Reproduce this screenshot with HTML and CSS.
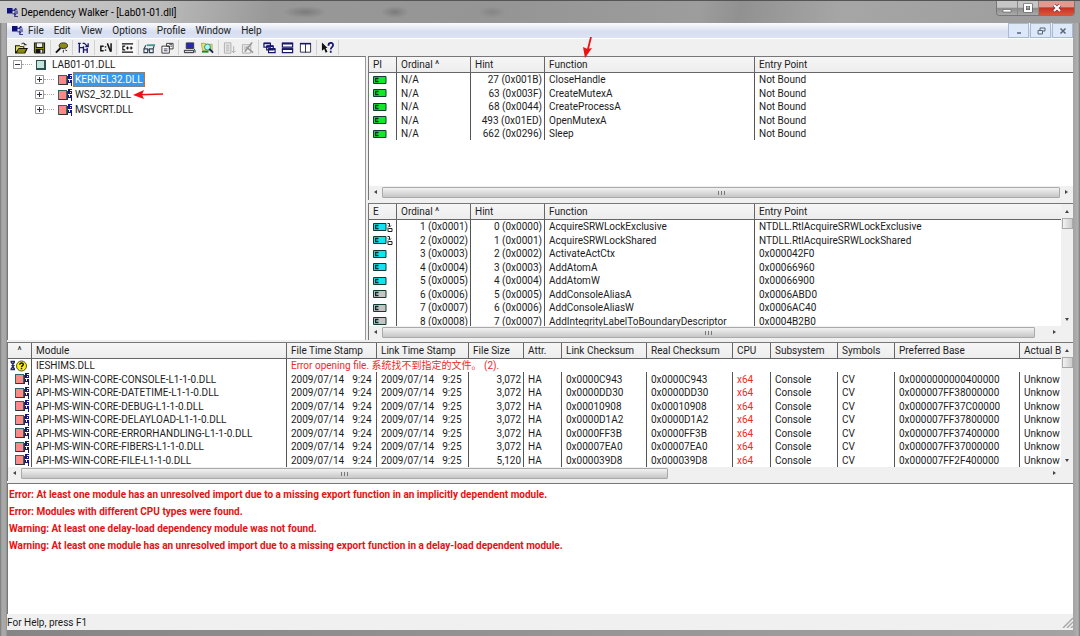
FILE: index.html
```html
<!DOCTYPE html>
<html lang="en">
<head>
<meta charset="utf-8">
<title>Dependency Walker - [Lab01-01.dll]</title>
<link rel="stylesheet" href="styles.css">
</head>
<body>
<svg class="symbols" aria-hidden="true">
  <symbol id="logo" viewBox="0 0 12 12"><path fill="#10107a" d="M0 1h6v6H0zM6 3h2v1H6zM8 2h1v3H8zM9 1h1v1H9zM9 2h2v1H9zM9 4h3v1H9zM6 7h2v1H6zM8 6h1v5H8zM9 6h3v1H9zM9 8h1v1H9zM9 10h3v1H9z"/></symbol>
  <symbol id="mod64" viewBox="0 0 15 12"><path fill="#2d6464" d="M0 1h9v10H0z"/><path fill="#f88" d="M1 2h7v8H1z"/><path fill="#333" d="M1 10h8V2h1v9H1z"/><path fill="#141482" fill-rule="evenodd" d="M10 0h4v1h-2v1h2v3h-4zM12 3v1h1V3zM10 6h1v2h1V6h2v6h-1V9h-3z"/></symbol>
  <symbol id="rootmod" viewBox="0 0 10 10"><path fill="#2d5050" d="M0 0h10v10H0z"/><path fill="#c4e4dc" d="M1 1h7v7H1z"/></symbol>
  <symbol id="fn" viewBox="0 0 20 10"><path fill="currentColor" stroke="#123c32" d="M.5 1.500h12.500v7H.5z"/><path fill="none" stroke="#052828" stroke-width="1.3" d="M5.500 3.500H2.600v3H5.500"/></symbol>
  <symbol id="fnfwd" viewBox="0 0 20 10"><path fill="currentColor" stroke="#123c32" d="M.5 1.500h12.500v7H.5z"/><path fill="none" stroke="#052828" stroke-width="1.3" d="M5.500 3.500H2.600v3H5.500"/><path fill="none" stroke="#222" d="M15 5.500v4h4v-3h-3.500M14.500 1.500h2v3M15 3.500l1.500 1.500 1.500-1.500"/></symbol>
  <symbol id="missing" viewBox="0 0 18 12"><path fill="#fff" stroke="#222a60" stroke-width="1.300" d="M.5 1.500H5M.5 9.500H5M1 2l3 3.500L1 9M4.500 2L2 5.500 4.500 9"/><circle cx="11.500" cy="6" r="5" fill="#ffee10" stroke="#555520"/><path fill="none" stroke="#111" stroke-width="1.4" d="M9.700 4.700C9.700 2.500 13.300 2.500 13.300 4.500 13.300 5.800 11.500 5.600 11.500 7.200M11.500 8v1.300"/></symbol>
</svg>
<div class="window">
  <header class="titlebar">
    <svg class="logo"><use href="#logo"/></svg>
    <h1 class="caption">Dependency Walker - [Lab01-01.dll]</h1>
    <div class="winbtns">
      <button class="winbtn" aria-label="Minimize"><svg viewBox="0 0 12 10" class="g"><path fill="#fff" stroke="#555" stroke-width=".6" d="M2 6.500h8v2.500H2z"/></svg></button>
      <button class="winbtn" aria-label="Maximize"><svg viewBox="0 0 12 10" class="g"><path fill="none" stroke="#555" stroke-width="3.200" d="M3 2h6v6H3z"/><path fill="none" stroke="#fff" stroke-width="2" d="M3 2h6v6H3z"/></svg></button>
      <button class="winbtn winclose" aria-label="Close"><svg viewBox="0 0 12 10" class="g"><path stroke="#733" stroke-width="3.600" d="M3 2l6 6M9 2L3 8"/><path stroke="#fff" stroke-width="2.200" d="M3 2l6 6M9 2L3 8"/></svg></button>
    </div>
  </header>
  <main class="client">
    <nav class="menubar">
      <svg class="logo"><use href="#logo"/></svg>
      <button class="menu">File</button><button class="menu">Edit</button><button class="menu">View</button><button class="menu">Options</button><button class="menu">Profile</button><button class="menu">Window</button><button class="menu">Help</button>
      <div class="mdibtns">
        <button class="mdibtn" aria-label="Minimize document"><svg viewBox="0 0 10 10"><path stroke="#567" stroke-width="1.500" d="M3 7h4"/></svg></button>
        <button class="mdibtn" aria-label="Restore document"><svg viewBox="0 0 10 10"><path fill="none" stroke="#567" d="M4 4V2h5v3H7M2 4.500h4.500v3.500H2z"/></svg></button>
        <button class="mdibtn" aria-label="Close document"><svg viewBox="0 0 10 10"><path stroke="#567" stroke-width="1.500" d="M2.500 2.500l5 5M7.500 2.500l-5 5"/></svg></button>
      </div>
    </nav>
    <div class="toolbar" role="toolbar">
      <div class="toolgroup">
        <button class="tool" aria-label="Open"><svg viewBox="0 0 14 12"><path fill="#151500" d="M0 3h5l1 1h4v2h4l-3 6H0z"/><path fill="#dfdf50" d="M1 4h4l1 1h3v1H4L1 10z"/><path fill="#8a8a10" d="M4 7h8l-2 4H2z"/><path fill="none" stroke="#111" d="M7 1.500c2-1.500 4-.5 4 1M9.500 2.500h3"/></svg></button>
        <button class="tool" aria-label="Save"><svg viewBox="0 0 14 12"><path fill="#111" d="M1 0h12v12H2l-1-1z"/><path fill="#8c8c14" d="M2 1h1v10H2zM11 1h1v10h-1zM3 6h8v1H3z"/><path fill="#eee" d="M4 1h6v4H4zM8 8h2v3H8z"/></svg></button>
      </div>
      <div class="toolgroup">
        <button class="tool" aria-label="View module"><svg viewBox="0 0 14 12"><path stroke="#111" stroke-width="2" d="M1 11l5-5"/><ellipse cx="9" cy="3.500" rx="4.500" ry="3" fill="#8c8c10" stroke="#222"/><path stroke="#223" d="M9 8v3M11 8l2 1"/></svg></button>
      </div>
      <div class="toolgroup">
        <button class="tool" aria-label="Auto expand"><svg viewBox="0 0 14 12"><path fill="none" stroke="#16166c" stroke-width="1.400" d="M1 1h3M2.500 1v10M3 5.500h4M7 4v7.500M7 8h4M11 6v5.500M6 1h2l3 3M12 1v3.500H9"/></svg></button>
      </div>
      <div class="toolgroup">
        <button class="tool" aria-label="View full paths"><svg viewBox="0 0 14 12"><path fill="none" stroke="#111" stroke-width="1.600" d="M5 4H2v5h3M7 4v1.500M7 7.500V9M9 1l3.500 9M13 1v9"/></svg></button>
      </div>
      <div class="toolgroup">
        <button class="tool pressed" aria-label="Undecorate C++ functions"><svg viewBox="0 0 14 12"><path fill="none" stroke="#111" stroke-width="1.200" d="M1 1.500h12M1 10.500h12M4.500 4H2v4h2.500M5.500 6h3M7 4.500v3M9.500 6h3M11 4.500v3"/></svg></button>
      </div>
      <div class="toolgroup">
        <button class="tool" aria-label="Search order"><svg viewBox="0 0 14 12"><path fill="none" stroke="#345" stroke-width="1.200" d="M1 7h4v4H1zM7 7h4v4H7zM5 8h2M1 7l2-4M11 7l1-4h-3"/><path stroke="#4a9a94" stroke-width="2" d="M4 3h9"/></svg></button>
        <button class="tool" aria-label="Properties"><svg viewBox="0 0 14 12"><path fill="#fff" stroke="#333" d="M1 4h8v7.500H1zM6 1h7v6H9V4H6z"/><path stroke="#335" d="M3 7h4M3 9h4M9 2h3M10 4h2"/></svg></button>
      </div>
      <div class="toolgroup">
        <button class="tool" aria-label="System information"><svg viewBox="0 0 14 12"><path fill="#2828b4" stroke="#334" d="M3.500.5h8v6h-8z"/><path fill="#ddd" stroke="#223" d="M1.500 8.500h10v2.500h-10zM12 7l1 2v2"/></svg></button>
        <button class="tool" aria-label="Configure module search"><svg viewBox="0 0 14 12"><path fill="#e8e060" stroke="#884" stroke-width=".6" d="M0 1h5l1 1h6v7H2z"/><circle cx="7" cy="5" r="3.200" fill="#9ff" stroke="#387"/><path stroke="#126" stroke-width="2" d="M9 7l4 4"/><path stroke="#282" stroke-width="2" d="M1 10h7"/></svg></button>
      </div>
      <div class="toolgroup">
        <button class="tool" aria-label="Start profiling" disabled><svg viewBox="0 0 14 12"><path fill="none" stroke="#aaa" d="M1.500.5h7v11h-7zM3 3h4M3 5h4M3 7h4M3 9h4M11.500 4v7M9.500 9l2 2 2-2"/></svg></button>
        <button class="tool" aria-label="Stop profiling" disabled><svg viewBox="0 0 14 12"><path fill="none" stroke="#aaa" d="M1.500 2.500h9v9h-9zM3 5h5M3 7h4"/><path stroke="#999" stroke-width="1.700" d="M12 0L4 10M6 5l7 6"/></svg></button>
      </div>
      <div class="toolgroup">
        <button class="tool" aria-label="Cascade"><svg viewBox="0 0 14 12"><path fill="#fff" stroke="#16166c" stroke-width="1.300" d="M1 1h7v4H1zM4 4h7v4H4zM6 7h7v4H6z"/><path stroke="#16166c" stroke-width="2" d="M1 1h7M4 4h7M6 7h7"/></svg></button>
        <button class="tool" aria-label="Tile horizontally"><svg viewBox="0 0 14 12"><path fill="#fff" stroke="#16166c" stroke-width="1.300" d="M1.500 1h11v4h-11zM1.500 7h11v4h-11z"/><path stroke="#16166c" stroke-width="2" d="M1 1.200h12M1 7.200h12"/></svg></button>
        <button class="tool" aria-label="Tile vertically"><svg viewBox="0 0 14 12"><path fill="#fff" stroke="#282850" d="M1.500 1.500h11v9h-11zM7 1v10"/><path stroke="#16166c" stroke-width="1.500" d="M1 1.200h12"/></svg></button>
      </div>
      <div class="toolgroup">
        <button class="tool" aria-label="Context help"><svg viewBox="0 0 14 12"><path fill="#111" d="M1 0l6 6H5l2 4-2 1-1.500-4L1 9z"/><path fill="none" stroke="#16166c" stroke-width="1.900" d="M8 3.500C8-.5 13-.5 13 3 13 5 10.500 5 10.500 7.500M10.500 9v2"/></svg></button>
      </div>
    </div>
    <div class="workspace">
      <div class="upper">
        <section class="pane tree" aria-label="Module dependency tree">
          <div class="node"><button class="expander" aria-label="Collapse"><svg viewBox="0 0 9 9"><path fill="#fff" stroke="#999" d="M.5.5h8v8h-8z"/><path stroke="#334" d="M2 4.500h5"/></svg></button><span class="branch"></span><svg class="rooticon"><use href="#rootmod"/></svg><span class="name">LAB01-01.DLL</span></div>
          <div class="children">
            <div class="node"><button class="expander" aria-label="Expand"><svg viewBox="0 0 9 9"><path fill="#fff" stroke="#999" d="M.5.5h8v8h-8z"/><path stroke="#334" d="M2 4.500h5M4.500 2v5"/></svg></button><span class="branch"></span><svg class="modicon"><use href="#mod64"/></svg><span class="name selected">KERNEL32.DLL</span></div>
            <div class="node"><button class="expander" aria-label="Expand"><svg viewBox="0 0 9 9"><path fill="#fff" stroke="#999" d="M.5.5h8v8h-8z"/><path stroke="#334" d="M2 4.500h5M4.500 2v5"/></svg></button><span class="branch"></span><svg class="modicon"><use href="#mod64"/></svg><span class="name">WS2_32.DLL<svg class="arrow-left" viewBox="0 0 30 9"><path stroke="#ed1111" stroke-width="1.500" d="M6 4.800L30 4"/><path fill="#ed1111" d="M0 5L11 0 9 4.700 11 9z"/></svg></span></div>
            <div class="node"><button class="expander" aria-label="Expand"><svg viewBox="0 0 9 9"><path fill="#fff" stroke="#999" d="M.5.5h8v8h-8z"/><path stroke="#334" d="M2 4.500h5M4.500 2v5"/></svg></button><span class="branch"></span><svg class="modicon"><use href="#mod64"/></svg><span class="name">MSVCRT.DLL</span></div>
          </div>
        </section>
        <div class="lists">
          <section class="pane list annotated" aria-label="Imports">
            <div class="view">
              <table class="grid functions">
                <colgroup><col class="c-icon"><col class="c-num"><col class="c-num"><col class="c-func"><col></colgroup>
                <thead><tr><th>PI</th><th>Ordinal ^</th><th>Hint</th><th><span class="marked">Function<svg class="arrow-down" viewBox="0 0 10 21"><path stroke="#ed1111" stroke-width="1.800" d="M8 0L4.500 14"/><path fill="#ed1111" d="M2 21L0 10l4.500 2L9 11z"/></svg></span></th><th>Entry Point</th></tr></thead>
                <tbody>
                  <tr><td><svg class="fn green"><use href="#fn"/></svg></td><td>N/A</td><td class="num">27 (0x001B)</td><td>CloseHandle</td><td>Not Bound</td></tr>
                  <tr><td><svg class="fn green"><use href="#fn"/></svg></td><td>N/A</td><td class="num">63 (0x003F)</td><td>CreateMutexA</td><td>Not Bound</td></tr>
                  <tr><td><svg class="fn green"><use href="#fn"/></svg></td><td>N/A</td><td class="num">68 (0x0044)</td><td>CreateProcessA</td><td>Not Bound</td></tr>
                  <tr><td><svg class="fn green"><use href="#fn"/></svg></td><td>N/A</td><td class="num">493 (0x01ED)</td><td>OpenMutexA</td><td>Not Bound</td></tr>
                  <tr><td><svg class="fn green"><use href="#fn"/></svg></td><td>N/A</td><td class="num">662 (0x0296)</td><td>Sleep</td><td>Not Bound</td></tr>
                </tbody>
              </table>
            </div>
            <div class="hscroll"><span class="tri left"></span><span class="track"><span class="thumb" style="width:100%"></span></span><span class="tri right"></span></div>
          </section>
          <section class="pane list" aria-label="Exports">
            <div class="scrollable">
              <div class="view">
                <table class="grid functions">
                  <colgroup><col class="c-icon"><col class="c-num"><col class="c-num"><col class="c-func"><col></colgroup>
                  <thead><tr><th>E</th><th>Ordinal ^</th><th>Hint</th><th>Function</th><th>Entry Point</th></tr></thead>
                  <tbody>
                    <tr><td><svg class="fn cyan"><use href="#fnfwd"/></svg></td><td class="num">1 (0x0001)</td><td class="num">0 (0x0000)</td><td>AcquireSRWLockExclusive</td><td>NTDLL.RtlAcquireSRWLockExclusive</td></tr>
                    <tr><td><svg class="fn cyan"><use href="#fnfwd"/></svg></td><td class="num">2 (0x0002)</td><td class="num">1 (0x0001)</td><td>AcquireSRWLockShared</td><td>NTDLL.RtlAcquireSRWLockShared</td></tr>
                    <tr><td><svg class="fn cyan"><use href="#fn"/></svg></td><td class="num">3 (0x0003)</td><td class="num">2 (0x0002)</td><td>ActivateActCtx</td><td>0x000042F0</td></tr>
                    <tr><td><svg class="fn cyan"><use href="#fn"/></svg></td><td class="num">4 (0x0004)</td><td class="num">3 (0x0003)</td><td>AddAtomA</td><td>0x00066960</td></tr>
                    <tr><td><svg class="fn cyan"><use href="#fn"/></svg></td><td class="num">5 (0x0005)</td><td class="num">4 (0x0004)</td><td>AddAtomW</td><td>0x00066900</td></tr>
                    <tr><td><svg class="fn gray"><use href="#fn"/></svg></td><td class="num">6 (0x0006)</td><td class="num">5 (0x0005)</td><td>AddConsoleAliasA</td><td>0x0006ABD0</td></tr>
                    <tr><td><svg class="fn gray"><use href="#fn"/></svg></td><td class="num">7 (0x0007)</td><td class="num">6 (0x0006)</td><td>AddConsoleAliasW</td><td>0x0006AC40</td></tr>
                    <tr><td><svg class="fn gray"><use href="#fn"/></svg></td><td class="num">8 (0x0008)</td><td class="num">7 (0x0007)</td><td>AddIntegrityLabelToBoundaryDescriptor</td><td>0x0004B2B0</td></tr>
                  </tbody>
                </table>
              </div>
              <div class="vscroll"><span class="tri up"></span><span class="vthumb"></span><span class="tri down"></span></div>
            </div>
            <div class="hscroll cornered"><span class="tri left"></span><span class="track"><span class="thumb" style="width:98%"></span></span><span class="tri right"></span></div>
          </section>
        </div>
      </div>
      <section class="pane list" aria-label="Modules">
        <div class="scrollable">
          <div class="view">
            <table class="grid modules">
              <colgroup><col class="m-icon"><col class="m-name"><col class="m-ftime"><col class="m-ltime"><col class="m-size"><col class="m-attr"><col class="m-lsum"><col class="m-rsum"><col class="m-cpu"><col class="m-sub"><col class="m-sym"><col class="m-base"><col></colgroup>
              <thead><tr><th class="center">^</th><th>Module</th><th>File Time Stamp</th><th>Link Time Stamp</th><th>File Size</th><th>Attr.</th><th>Link Checksum</th><th>Real Checksum</th><th>CPU</th><th>Subsystem</th><th>Symbols</th><th>Preferred Base</th><th>Actual B</th></tr></thead>
              <tbody>
                <tr><td class="iconcell"><svg class="missing"><use href="#missing"/></svg></td><td>IESHIMS.DLL</td><td class="red" colspan="11">Error opening file. 系统找不到指定的文件。 (2).</td></tr>
                <tr><td class="iconcell"><svg class="modicon"><use href="#mod64"/></svg></td><td>API-MS-WIN-CORE-CONSOLE-L1-1-0.DLL</td><td><time>2009/07/14</time><time>9:24</time></td><td><time>2009/07/14</time><time>9:25</time></td><td class="num">3,072</td><td>HA</td><td>0x0000C943</td><td>0x0000C943</td><td class="red">x64</td><td>Console</td><td>CV</td><td>0x0000000000400000</td><td>Unknow</td></tr>
                <tr><td class="iconcell"><svg class="modicon"><use href="#mod64"/></svg></td><td>API-MS-WIN-CORE-DATETIME-L1-1-0.DLL</td><td><time>2009/07/14</time><time>9:24</time></td><td><time>2009/07/14</time><time>9:25</time></td><td class="num">3,072</td><td>HA</td><td>0x0000DD30</td><td>0x0000DD30</td><td class="red">x64</td><td>Console</td><td>CV</td><td>0x000007FF38000000</td><td>Unknow</td></tr>
                <tr><td class="iconcell"><svg class="modicon"><use href="#mod64"/></svg></td><td>API-MS-WIN-CORE-DEBUG-L1-1-0.DLL</td><td><time>2009/07/14</time><time>9:24</time></td><td><time>2009/07/14</time><time>9:25</time></td><td class="num">3,072</td><td>HA</td><td>0x00010908</td><td>0x00010908</td><td class="red">x64</td><td>Console</td><td>CV</td><td>0x000007FF37C00000</td><td>Unknow</td></tr>
                <tr><td class="iconcell"><svg class="modicon"><use href="#mod64"/></svg></td><td>API-MS-WIN-CORE-DELAYLOAD-L1-1-0.DLL</td><td><time>2009/07/14</time><time>9:24</time></td><td><time>2009/07/14</time><time>9:25</time></td><td class="num">3,072</td><td>HA</td><td>0x0000D1A2</td><td>0x0000D1A2</td><td class="red">x64</td><td>Console</td><td>CV</td><td>0x000007FF37800000</td><td>Unknow</td></tr>
                <tr><td class="iconcell"><svg class="modicon"><use href="#mod64"/></svg></td><td>API-MS-WIN-CORE-ERRORHANDLING-L1-1-0.DLL</td><td><time>2009/07/14</time><time>9:24</time></td><td><time>2009/07/14</time><time>9:25</time></td><td class="num">3,072</td><td>HA</td><td>0x0000FF3B</td><td>0x0000FF3B</td><td class="red">x64</td><td>Console</td><td>CV</td><td>0x000007FF37400000</td><td>Unknow</td></tr>
                <tr><td class="iconcell"><svg class="modicon"><use href="#mod64"/></svg></td><td>API-MS-WIN-CORE-FIBERS-L1-1-0.DLL</td><td><time>2009/07/14</time><time>9:24</time></td><td><time>2009/07/14</time><time>9:25</time></td><td class="num">3,072</td><td>HA</td><td>0x00007EA0</td><td>0x00007EA0</td><td class="red">x64</td><td>Console</td><td>CV</td><td>0x000007FF37000000</td><td>Unknow</td></tr>
                <tr><td class="iconcell"><svg class="modicon"><use href="#mod64"/></svg></td><td>API-MS-WIN-CORE-FILE-L1-1-0.DLL</td><td><time>2009/07/14</time><time>9:24</time></td><td><time>2009/07/14</time><time>9:25</time></td><td class="num">5,120</td><td>HA</td><td>0x000039D8</td><td>0x000039D8</td><td class="red">x64</td><td>Console</td><td>CV</td><td>0x000007FF2F400000</td><td>Unknow</td></tr>
              </tbody>
            </table>
          </div>
          <div class="vscroll"><span class="tri up"></span><span class="vthumb"></span><span class="tri down"></span></div>
        </div>
        <div class="hscroll cornered"><span class="tri left"></span><span class="track"><span class="thumb" style="width:63%"></span></span><span class="tri right"></span></div>
      </section>
      <section class="pane log" aria-label="Log">
        <p>Error: At least one module has an unresolved import due to a missing export function in an implicitly dependent module.</p>
        <p>Error: Modules with different CPU types were found.</p>
        <p>Warning: At least one delay-load dependency module was not found.</p>
        <p>Warning: At least one module has an unresolved import due to a missing export function in a delay-load dependent module.</p>
      </section>
    </div>
    <footer class="statusbar"><span>For Help, press F1</span><svg class="sizegrip" viewBox="0 0 12 12"><path stroke="#aaa" stroke-width="1.500" d="M2 12L12 2M6 12l6-6M10 12l2-2"/></svg></footer>
  </main>
</div>
</body>
</html>
```
FILE: styles.css
```css
* { box-sizing: border-box; }
body {
  margin: 0;
  font: 10px/13px Roboto, "Noto Sans CJK SC", sans-serif;
  color: #1c1c1c;
}
button { font: inherit; color: inherit; border: 0; padding: 0; background: none; }
svg { display: block; }
.symbols { position: absolute; width: 0; height: 0; }

.window {
  display: flex;
  flex-direction: column;
  height: 100vh;
  padding: 0 7px 6px;
  background: linear-gradient(90deg, #777 0, #aaa 2px, #a6a6a6 6px, #858585 7px, #a3a3a3 calc(100% - 7px), #b0b0b0 calc(100% - 2px), #777 100%);
}
.titlebar {
  display: flex;
  align-items: center;
  gap: 3px;
  height: 23px;
  margin: 0 -7px;
  padding-left: 7px;
  border-top: 1px solid #555;
  background:
    radial-gradient(ellipse 22px 6px at 305px 11px, #7b7b7b, transparent),
    radial-gradient(ellipse 14px 6px at 395px 11px, #7b7b7b, transparent),
    radial-gradient(ellipse 14px 6px at 492px 11px, #858585, transparent),
    linear-gradient(100deg, #cbcbcb 0, #bdbdbd 150px, #989898 270px, #959595 500px, #9d9d9d 690px, #919191 730px, #a6a6a6 830px, #9c9c9c 100%);
}
.caption { margin: 0; font-size: 10px; font-weight: 400; color: #000; }
.logo { width: 11px; height: 11px; }
.winbtns { display: flex; align-self: flex-start; margin-left: auto; margin-right: 5px; height: 15px; border: 1px solid #777; border-top: 0; border-radius: 0 0 4px 4px; overflow: hidden; }
.winbtn { display: grid; place-items: center; width: 21px; background: linear-gradient(#c6c6c6 45%, #8c8c8c 50%, #aaa); border-right: 1px solid #888; }
.winclose { width: 35px; border-right: 0; background: linear-gradient(#e09a90 40%, #c4341e 50%, #d8563c); }
.g { width: 12px; height: 10px; }

.client { flex: 1; min-height: 0; display: flex; flex-direction: column; background: #f0f0f0; }
.menubar { display: flex; align-items: center; height: 15px; padding-left: 5px; background: linear-gradient(#fafbfe, #d6def0 60%, #dce3f3); }
.menu { padding: 0 5px; color: #222; }
.mdibtns { display: flex; gap: 1px; margin-left: auto; align-self: stretch; }
.mdibtn { display: grid; place-items: center; width: 21px; border: 1px solid #a9bbd4; background: #dde9f8; }
.mdibtn svg { width: 10px; height: 10px; }

.toolbar { display: flex; align-items: center; height: 18px; padding-left: 4px; border-top: 1px solid #fff; }
.toolgroup { display: flex; gap: 1px; padding: 0 2px; border-right: 1px solid #d2d2d2; }
.tool { display: grid; place-items: center; width: 17px; height: 15px; }
.pressed { background: #fafafa; }
.tool svg { width: 13px; height: 12px; }

.workspace { flex: 1; min-height: 0; display: grid; grid-template-rows: 284fr 139fr 131fr; gap: 2px; }
.upper { display: grid; grid-template-columns: minmax(0, 359fr) minmax(0, 705fr); gap: 2px; min-height: 0; }
.lists { display: grid; grid-template-rows: 144fr 137fr; gap: 3px; min-height: 0; }
.pane { min-width: 0; min-height: 0; background: #fff; border-top: 1px solid #777; border-left: 1px solid #777; overflow: hidden; }

.tree { padding: 0 5px; border-right: 1px solid #999; }
.node { display: flex; align-items: center; height: 15px; }
.children { margin-left: 22px; }
.expander svg { width: 9px; height: 9px; }
.branch { width: 10px; margin-right: 4px; border-top: 1px dotted #aaa; }
.rooticon { width: 10px; height: 10px; margin-right: 6px; }
.modicon { width: 15px; height: 12px; }
.children .name { position: relative; padding: 0 2px; line-height: 15px; }
.selected { background: #3399f0; outline: 1px dotted #c47020; outline-offset: -1px; color: #fff; }
.arrow-left { position: absolute; left: 100%; top: 3px; width: 30px; height: 9px; }

.list { display: flex; flex-direction: column; }
.scrollable { flex: 1; display: flex; min-height: 0; }
.view { flex: 1; min-width: 0; overflow: hidden; }
.annotated, .annotated .view { overflow: visible; }
.grid { width: 100%; table-layout: fixed; border-collapse: separate; border-spacing: 0; }
.grid th { height: 16px; padding: 0 4px; text-align: left; font-weight: 400; background: linear-gradient(#f6f6f6, #ededed); border-right: 1px solid #666; border-bottom: 1px solid #666; white-space: nowrap; }
.grid td { height: 13px; padding: 0 4px; line-height: 13px; border-right: 1px solid #555; white-space: nowrap; overflow: hidden; }
.grid tr:nth-child(even) td { height: 14px; }
.grid th:last-child, .grid td:last-child { border-right: 0; padding-right: 0; }
.grid .num { text-align: right; padding-right: 2px; }
.grid .center { text-align: center; }
.grid .iconcell { padding: 0 1px; }
.iconcell svg { margin-left: auto; }
.iconcell .missing { width: 18px; height: 12px; margin-left: 1px; }
.grid .red { color: #f02828; }
.c-icon { width: 28px; }
.c-num { width: 74px; }
.c-func { width: 210px; }
.m-icon { width: 24px; }
.m-name { width: 255px; }
.m-ftime { width: 90px; }
.m-ltime { width: 92px; }
.m-size { width: 55px; }
.m-attr { width: 38px; }
.m-lsum { width: 85px; }
.m-rsum { width: 86px; }
.m-cpu { width: 38px; }
.m-sub { width: 67px; }
.m-sym { width: 57px; }
.m-base { width: 125px; }
time + time { margin-left: 8px; }
.fn { width: 20px; height: 10px; }
.green { color: #10e828; }
.cyan { color: #10e4ee; }
.gray { color: #c4c4c4; }
.marked { position: relative; }
.arrow-down { position: absolute; left: 34px; bottom: 12px; width: 10px; height: 21px; z-index: 2; }

.hscroll { display: flex; align-items: flex-start; height: 14px; gap: 5px; padding: 1px 5px 0; background: #f0f0f0; }
.hscroll .tri { margin-top: 3px; }
.cornered { padding-right: 17px; }
.track { flex: 1; display: flex; height: 11px; }
.thumb { display: block; border: 1px solid #aaa; border-radius: 1px; background: repeating-linear-gradient(90deg, #777 0 1px, transparent 1px 3px) center / 7px 4px no-repeat, linear-gradient(#f2f2f2, #dcdcdc 50%, #c6c6c6); }
.vscroll { display: flex; flex-direction: column; align-items: center; width: 12px; padding: 6px 0 5px; background: #f0f0f0; }
.vthumb { width: 11px; height: 11px; margin: 5px 0 auto; border: 1px solid #aaa; background: linear-gradient(90deg, #f2f2f2, #ccc); }
.tri { border: 2px solid transparent; }
.left { border-left: 0; border-right: 3px solid #444; }
.right { border-right: 0; border-left: 3px solid #444; }
.up { border-top: 0; border-bottom: 3px solid #444; }
.down { border-bottom: 0; border-top: 3px solid #444; }

.log { padding: 2px 1px; color: #e81010; font-weight: 700; }
.log p { margin: 0; line-height: 17px; }
.statusbar { display: flex; align-items: center; justify-content: space-between; height: 16px; }
.sizegrip { width: 12px; height: 12px; }
```
